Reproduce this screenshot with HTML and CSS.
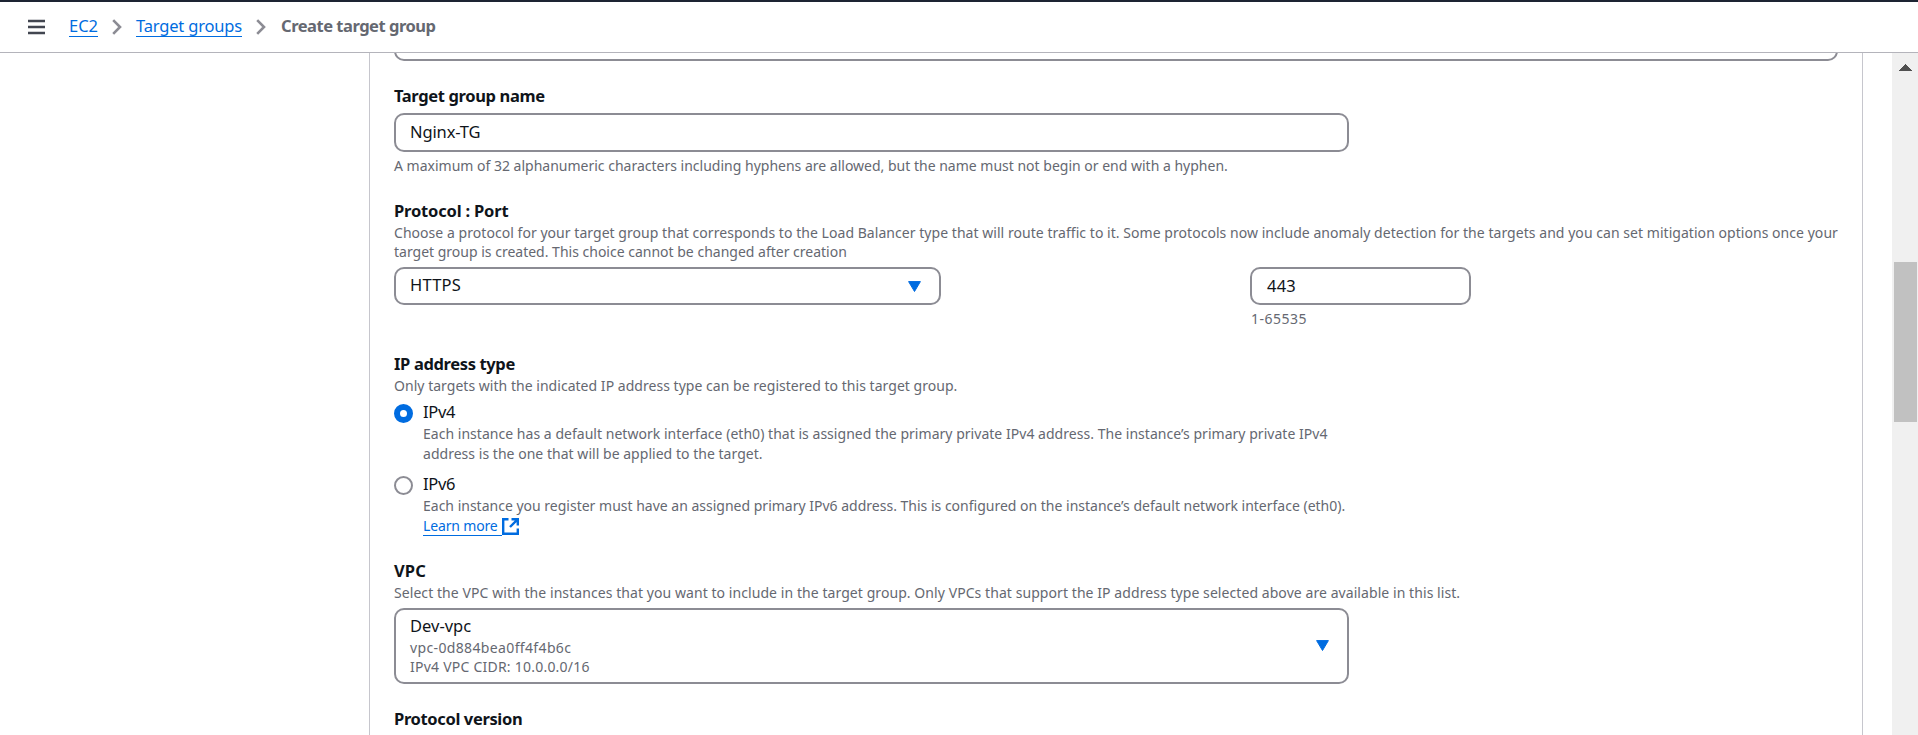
FILE: index.html
```html
<!DOCTYPE html>
<html lang="en">
<head>
<meta charset="utf-8">
<title>Create target group</title>
<link rel="stylesheet" href="styles.css">
</head>
<body>
<header class="topbar">
  <svg class="menu" viewBox="0 0 17 16"><path d="M0 2h17M0 8h17M0 14h17"/></svg>
  <nav class="crumbs">
    <a class="crumb" href="#">EC2</a>
    <svg class="chevron" viewBox="0 0 10 16"><path d="M1.2 1.2 8 8l-6.800 6.800"/></svg>
    <a class="crumb crumb-groups" href="#">Target groups</a>
    <svg class="chevron" viewBox="0 0 10 16"><path d="M1.200 1.200 8 8l-6.800 6.800"/></svg>
    <span class="current">Create target group</span>
  </nav>
</header>
<div class="body">
  <main class="panel">
    <div class="card-end"></div>

    <section class="field field-name">
      <h2 class="label">Target group name</h2>
      <div class="control name-input">Nginx-TG</div>
      <p class="hint">A maximum of 32 alphanumeric characters including hyphens are allowed, but the name must not begin or end with a hyphen.</p>
    </section>

    <section class="field field-protocol">
      <h2 class="label tight">Protocol : Port</h2>
      <p class="hint"><span class="w-choose">Choose a protocol for your target group that corresponds to the Load Balancer type that will route traffic to it. Some protocols now include anomaly detection for the targets and you can set mitigation options once your</span><br>target group is created. This choice cannot be changed after creation</p>
      <div class="protocol-row">
        <div class="control select protocol"><span class="wide">HTTPS</span><svg class="caret" viewBox="0 0 13 11"><path d="M.6.6h11.800L6.500 10.500z"/></svg></div>
        <div class="port-col">
          <div class="control port wide">443</div>
          <p class="hint w-range">1-65535</p>
        </div>
      </div>
    </section>

    <section class="field field-ip">
      <h2 class="label">IP address type</h2>
      <p class="hint w-only">Only targets with the indicated IP address type can be registered to this target group.</p>
      <div class="option">
        <span class="radio checked"></span>
        <div>
          <div class="option-name">IPv4</div>
          <p class="desc"><span class="w-each">Each instance has a default network interface (eth0) that is assigned the primary private IPv4 address. The instance’s primary private IPv4</span><br><span class="w-each">address is the one that will be applied to the target.</span></p>
        </div>
      </div>
      <div class="option second">
        <span class="radio"></span>
        <div>
          <div class="option-name">IPv6</div>
          <p class="desc">Each instance you register must have an assigned primary IPv6 address. This is configured on the instance’s default network interface (eth0).</p>
          <a class="learn" href="#"><span class="learn-text">Learn more</span><svg class="external" viewBox="0 0 17 17"><path d="M6.500 1.200H1.200v14.600h14.600v-5.300M9.500 1.200h6.300v6.300M15.600 1.400 8 9"/></svg></a>
        </div>
      </div>
    </section>

    <section class="field field-vpc">
      <h2 class="label label-vpc">VPC</h2>
      <p class="hint w-select">Select the VPC with the instances that you want to include in the target group. Only VPCs that support the IP address type selected above are available in this list.</p>
      <div class="control select vpc">
        <div>
          <div class="vpc-name">Dev-vpc</div>
          <div class="vpc-id">vpc-0d884bea0ff4f4b6c</div>
          <div class="vpc-cidr">IPv4 VPC CIDR: 10.0.0.0/16</div>
        </div>
        <svg class="caret" viewBox="0 0 13 11"><path d="M.6.6h11.800L6.500 10.500z"/></svg>
      </div>
    </section>

    <h2 class="label">Protocol version</h2>
  </main>
  <aside class="scrollbar">
    <svg class="arrow" viewBox="0 0 13 7" shape-rendering="crispEdges"><path d="M0 7 6.500 0 13 7z"/></svg>
    <div class="thumb"></div>
  </aside>
</div>
</body>
</html>
```
FILE: styles.css
```css
* { box-sizing: border-box; }

body {
  margin: 0;
  height: 735px;
  overflow: hidden;
  display: flex;
  flex-direction: column;
  background: #fff;
  color: #0f141a;
  font: 16.5px/24px "Noto Sans", sans-serif;
}

h2, p { margin: 0; }
svg { display: block; flex: none; fill: none; }

/* Breadcrumb bar */
.topbar {
  flex: none;
  height: 53px;
  display: flex;
  align-items: flex-start;
  padding: 12px 0 0 28px;
  border-top: 2px solid #1d2433;
  border-bottom: 1px solid #b4b4bb;
}
.menu { width: 17px; height: 16px; margin: 5px 24px 0 0; stroke: #424650; stroke-width: 2.3; }
.crumbs { display: flex; align-items: flex-start; }
.crumb {
  height: 23px;
  line-height: 24px;
  color: #006ce0;
  text-decoration: none;
  border-bottom: 1px solid #006ce0;
}
.crumb-groups { letter-spacing: -.18px; }
.chevron { width: 10px; height: 16px; margin: 5px 14px 0; stroke: #8c8c94; stroke-width: 2.6; }
.current { margin-left: 1px; color: #656871; font-weight: 700; letter-spacing: -.48px; }

.body { flex: 1; min-height: 0; display: flex; justify-content: space-between; }
.panel {
  width: 1494px;
  margin-left: 369px;
  padding: 0 24px;
  border: solid #c6c6cd;
  border-width: 0 1px;
  white-space: nowrap;
  overflow: hidden;
}
.card-end {
  height: 8px;
  overflow: hidden;
  display: flex;
  align-items: flex-end;
}
.card-end::after {
  content: "";
  flex: 1;
  height: 30px;
  border: 2px solid #8c8c94;
  border-radius: 10px;
}

/* Form fields */
.label { font-size: 16.5px; line-height: 24px; font-weight: 700; letter-spacing: -.36px; }
.label.tight { letter-spacing: -.18px; }
.label-vpc { letter-spacing: .1px; }
.hint, .desc { font-size: 14px; line-height: 19px; color: #656871; }
.desc { line-height: 20px; }
.control {
  border: 2px solid #8c8c94;
  border-radius: 10px;
  padding: 0 14px;
}
.wide { letter-spacing: .22px; }

.field-name { margin-top: 23px; }
.name-input { width: 955px; height: 39px; margin: 5px 0 4px; line-height: 33px; letter-spacing: -.12px; }

.field-protocol { margin-top: 24px; }
.w-choose { letter-spacing: .044px; }
.protocol-row { display: flex; margin-top: 6px; }
.select { display: flex; align-items: center; justify-content: space-between; }
.protocol { width: 547px; height: 38px; margin-right: 309px; padding-right: 18px; line-height: 32px; align-items: flex-start; }
.protocol .caret { margin-top: 12px; }
.caret { width: 13px; height: 11px; fill: #006ce0; stroke: #006ce0; stroke-linejoin: round; }
.port { width: 221px; height: 38px; padding-left: 15px; line-height: 34px; }
.w-range { margin: 4px 0 0 1px; letter-spacing: .48px; }

.field-ip { margin-top: 24px; }
.w-only { letter-spacing: .03px; }
.option { display: flex; margin-top: 5px; }
.second { margin-top: 8px; }
.radio {
  width: 19px;
  height: 19px;
  margin: 4px 10px 0 0;
  border: 2px solid #8c8c94;
  border-radius: 50%;
}
.checked { border: 6px solid #006ce0; }
.option-name { letter-spacing: -.3px; }
.w-each { letter-spacing: .03px; }
.learn { display: flex; color: #006ce0; font-size: 14px; line-height: 20px; text-decoration: none; }
.learn-text { width: 79px; height: 20px; letter-spacing: -.15px; border-bottom: 1px solid #006ce0; }
.external { width: 17px; height: 17px; margin: 2px 0 0; stroke: #006ce0; stroke-width: 2.4; }

.field-vpc { margin: 23px 0; }
.w-select { letter-spacing: .069px; }
.vpc { width: 955px; height: 76px; margin-top: 6px; padding-right: 18px; }
.vpc .caret { margin-bottom: 2px; }
.vpc-name { margin-top: -2px; }
.vpc-id, .vpc-cidr { font-size: 14px; line-height: 19px; color: #656871; letter-spacing: .36px; }
.vpc-cidr { letter-spacing: .23px; }

/* Page scrollbar */
.scrollbar { width: 26px; background: #f0f0f0; padding: 11px 1px 0 2px; }
.arrow { width: 13px; height: 7px; margin-left: 5px; fill: #505050; }
.thumb { height: 160px; margin-top: 191px; background: #c1c1c1; }
```
